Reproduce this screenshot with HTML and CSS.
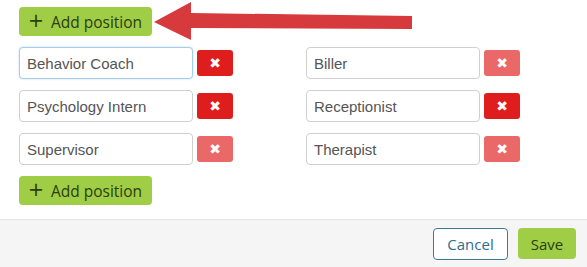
FILE: index.html
```html
<!DOCTYPE html>
<html>
<head>
<meta charset="utf-8">
<link rel="stylesheet" href="styles.css">
</head>
<body>
<div class="dialog">
  <div class="content">
    <button class="add-btn"><span class="plus">+</span>Add position</button>
    <div class="grid">
      <div class="row"><div class="field focused">Behavior Coach</div><button class="del dark">&#x2716;</button></div>
      <div class="row"><div class="field">Biller</div><button class="del light">&#x2716;</button></div>
      <div class="row"><div class="field">Psychology Intern</div><button class="del dark">&#x2716;</button></div>
      <div class="row"><div class="field">Receptionist</div><button class="del dark">&#x2716;</button></div>
      <div class="row"><div class="field">Supervisor</div><button class="del light">&#x2716;</button></div>
      <div class="row"><div class="field">Therapist</div><button class="del light">&#x2716;</button></div>
    </div>
    <button class="add-btn bottom"><span class="plus">+</span>Add position</button>
  </div>
  <div class="footer">
    <button class="cancel">Cancel</button>
    <button class="save">Save</button>
  </div>
  <svg class="arrow" width="587" height="50" viewBox="0 0 587 50">
    <polygon points="154,22 191,2 191,13 412,16 412,29 191,28 191,40" fill="#d63a3d"/>
  </svg>
</div>
</body>
</html>
```
FILE: styles.css
```css
* { box-sizing: border-box; }
html, body { margin: 0; padding: 0; background: #fff; }
body { width: 587px; height: 267px; overflow: hidden; font-family: "Open Sans", sans-serif; }
.dialog { position: relative; width: 587px; height: 267px; display: flex; flex-direction: column; }
.content { padding: 7px 0 0 19px; height: 220px; border-bottom: 1px solid #e4e4e4; }
.add-btn {
  display: flex; align-items: center;
  width: 133px; height: 29px; padding: 0 0 0 9px; margin: 0;
  background: #9fcd45; border: none; border-radius: 4px;
  font-family: "Open Sans", sans-serif; font-size: 15.5px; color: #2c3d10;
}
.plus {
  font-family: "DejaVu Sans", sans-serif; font-size: 19px; line-height: 1;
  margin-right: 7px; margin-top: -2px; flex: none;
}
.add-btn.bottom { margin-top: 11px; }
.grid { display: grid; grid-template-columns: 287px 287px; row-gap: 11px; margin-top: 11px; }
.row { display: flex; align-items: center; gap: 4px; height: 32px; }
.field {
  width: 174px; height: 32px; padding: 0 7px; margin: 0;
  display: flex; align-items: center;
  border: 1px solid #cfcfcf; border-radius: 4px; background: #fff;
  font-family: "Liberation Sans", Arial, sans-serif; font-size: 15px; color: #555;
  white-space: nowrap;
}
.field.focused { border-color: #a6cde9; box-shadow: 0 0 2px rgba(120,180,225,0.5); }
.del {
  width: 36px; height: 26px; padding: 0; margin: 0; border: none; border-radius: 3px;
  display: flex; align-items: center; justify-content: center;
  color: #fff; font-family: "DejaVu Sans", sans-serif; font-size: 14px; line-height: 1;
}
.del.dark { background: #df1d1d; }
.del.light { background: #ea6868; }
.footer {
  flex: 1; background: #f5f5f5; display: flex; justify-content: flex-end; align-items: center;
  gap: 10px; padding: 0 11px 0 0;
}
.cancel {
  width: 75px; height: 32px; margin: 0; background: #fff; border: 1px solid #3b7b96; border-radius: 4px;
  font-family: "Open Sans", sans-serif; font-size: 15px; color: #2f6d8c;
}
.save {
  width: 58px; height: 31px; margin: 0; background: #9fcd45; border: none; border-radius: 4px;
  font-family: "Open Sans", sans-serif; font-size: 15px; color: #2c3d10;
}
.arrow { position: absolute; left: 0; top: 0; pointer-events: none; }
```
